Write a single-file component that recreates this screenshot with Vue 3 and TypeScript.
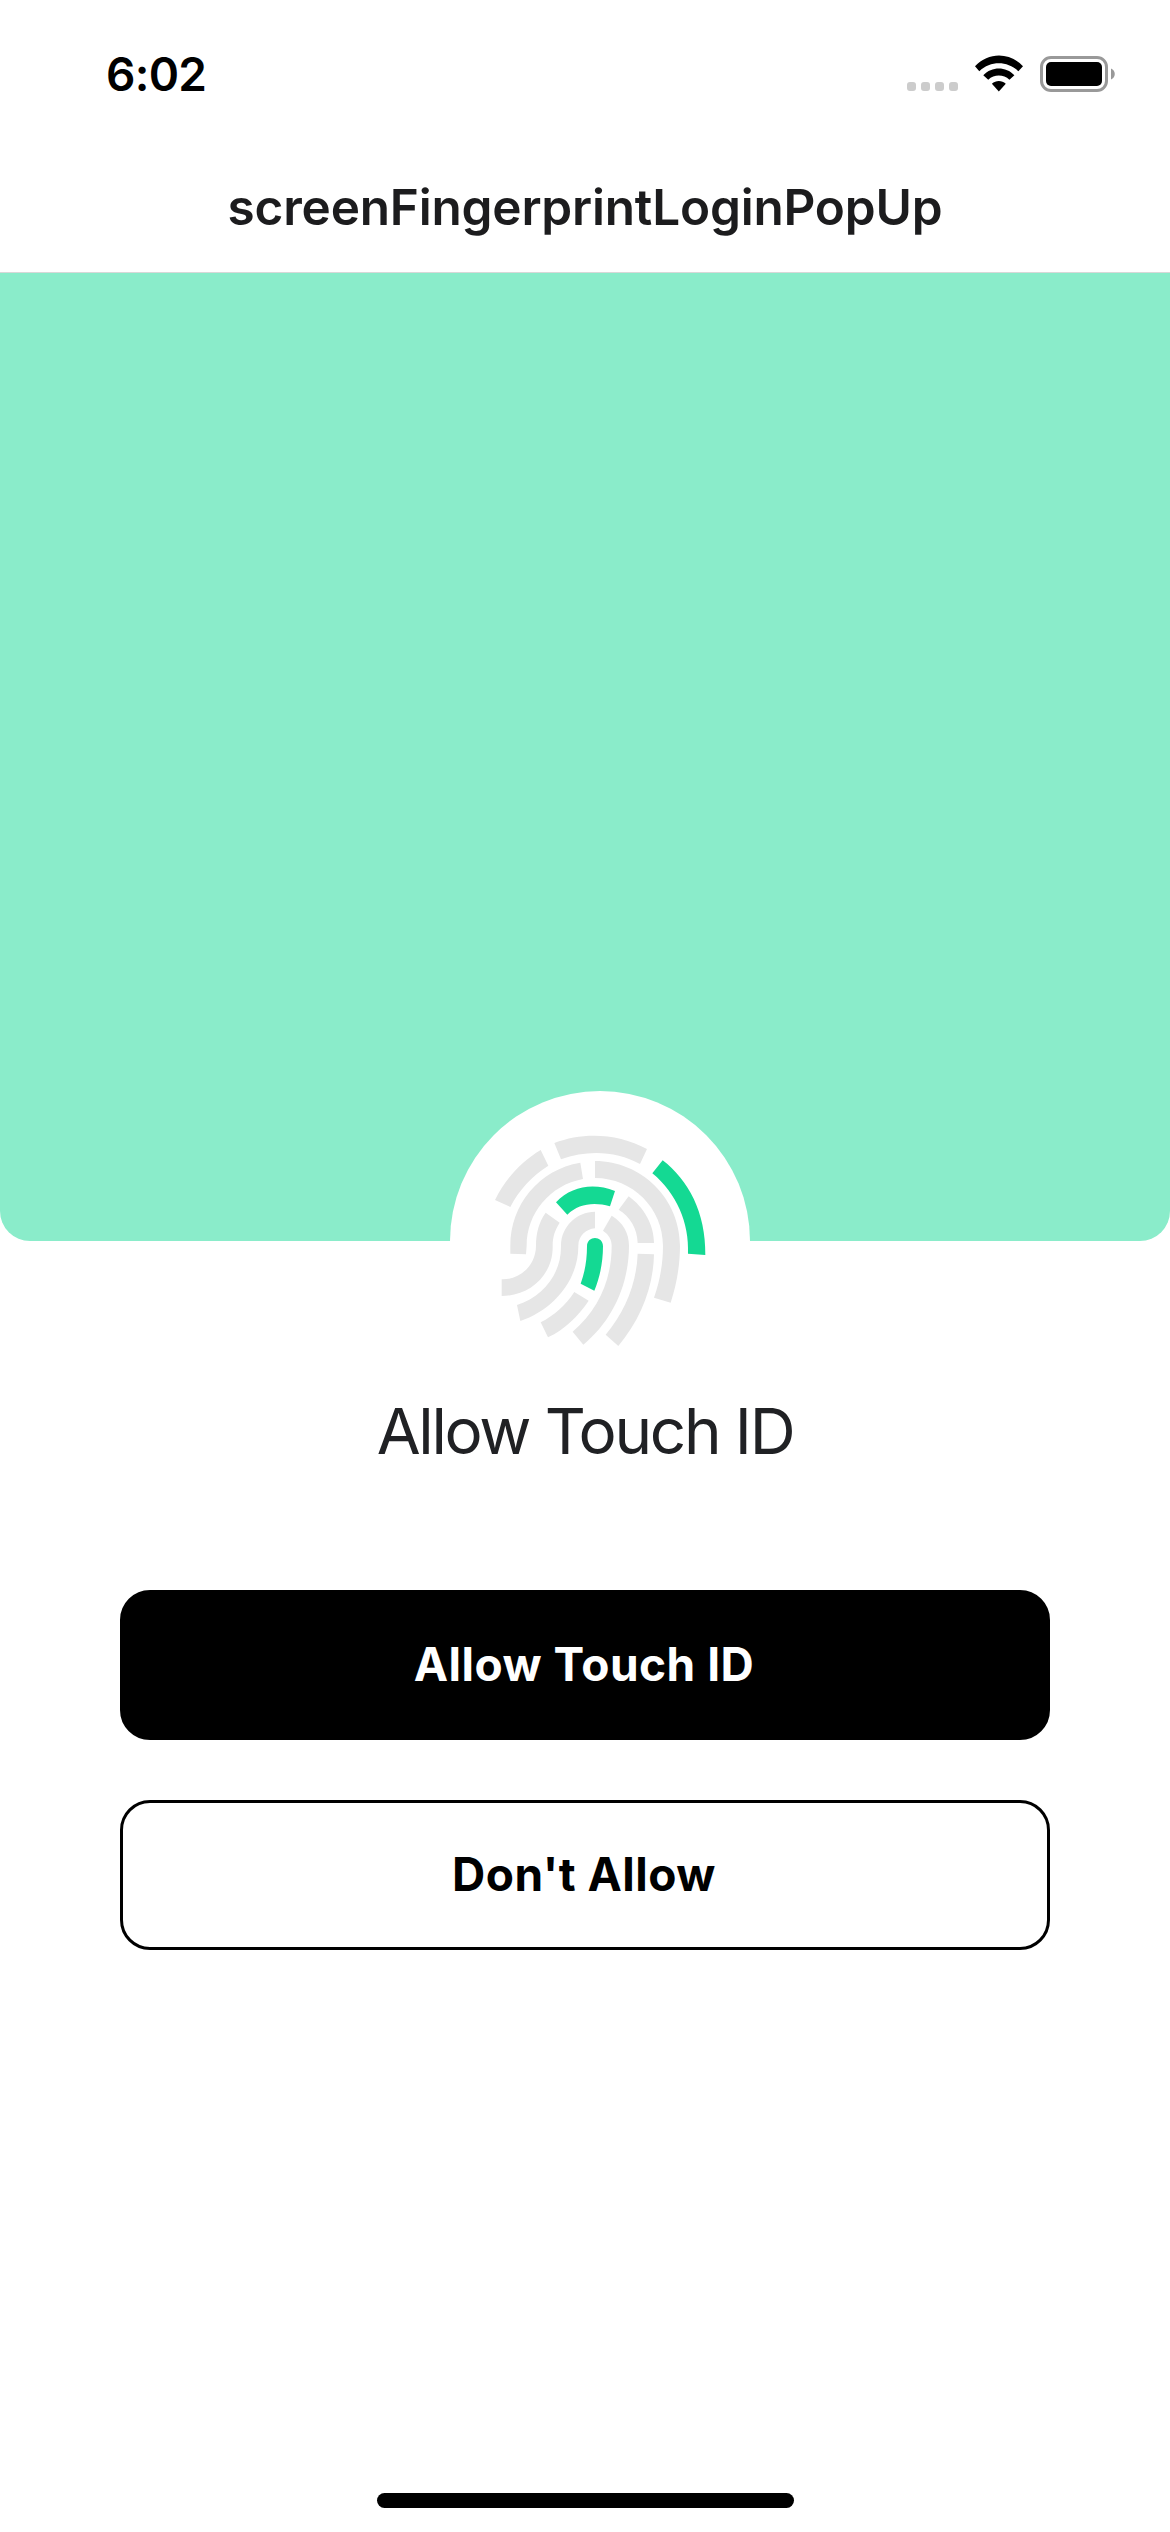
<script setup lang="ts">
const title: string = 'screenFingerprintLoginPopUp'

const greyRidges: string[] = [
  'M165 360C196 296 246 243 302 210L325 257C277 287 237 330 211 381Z',
  'M343 189C430 155 535 160 621 207L600 252C530 214 445 208 363 238Z',
  'M211 521V497C211 375 297 268 421 248L429 297C330 315 260 400 260 497L258 523Z',
  'M465 243C605 243 720 357 720 497C720 556 710 613 692 668L642 653C660 603 669 550 669 497C669 385 578 294 465 294Z',
  'M566 349C612 382 642 435 642 489H593C592 445 570 410 536 389Z',
  'M593 521L642 523C640 625 600 720 535 798L497 764C555 695 590 610 593 521Z',
  'M317 398L359 428C345 450 338 470 338 497C340 585 270 648 185 648V598C240 600 288 555 288 497C288 460 297 425 317 398Z',
  'M465 395V445C438 447 415 468 415 497C416 600 340 690 241 723L231 675C310 650 365 580 363 497C363 440 410 395 465 395Z',
  'M403 636L446 662C415 708 375 748 324 772L302 727C342 707 378 675 403 636Z',
  'M515 407C550 428 567 460 567 497C567 610 520 720 430 794L398 755C475 690 515 600 515 497C515 480 508 465 489 452Z',
]

const greenRidges: string[] = [
  'M668 241C745 300 798 398 796 525L744 521C748 430 710 340 637 280Z',
  'M348 367C395 318 460 308 525 333L510 379C460 365 415 372 382 404Z',
  'M441 499C441 466 489 466 489 499C489 545 480 592 463 632L422 611C435 575 441 540 441 499Z',
]
</script>

<template>
  <main class="screen">
    <header class="status">
      <span class="time">6:02</span>
      <div class="indicators">
        <div class="dots"><i v-for="n in 4" :key="n"></i></div>
        <svg class="wifi" viewBox="255 44 145 110" aria-hidden="true">
          <path d="M255 77C296 34 359 34 400 77L386 92C352 60 302 60 268 92Z" />
          <path d="M280 104C306 77 348 77 374 104L359 118C341 101 313 101 295 118Z" />
          <path d="M306 130C318 119 336 119 348 130L327 153Z" />
        </svg>
        <svg class="battery" viewBox="0 0 76 36" aria-hidden="true">
          <rect x="1.5" y="1.5" width="65" height="33" rx="9.5" fill="none" stroke="#999" stroke-width="3" />
          <rect x="6" y="6" width="56" height="24" rx="5" />
          <path d="M71 12.5C76 14.5 76 21.5 71 23.5Z" fill="#999" />
        </svg>
      </div>
    </header>

    <h1 class="title"><span>{{ title }}</span></h1>

    <section class="hero">
      <div class="badge">
        <svg class="fingerprint" viewBox="165 165 635 635" aria-hidden="true">
          <path v-for="d in greyRidges" :key="d" :d="d" fill="#e6e6e6" />
          <path v-for="d in greenRidges" :key="d" :d="d" fill="#14d993" />
        </svg>
      </div>
    </section>

    <h2 class="heading"><span>Allow Touch ID</span></h2>

    <div class="actions">
      <button class="btn primary" type="button">Allow Touch ID</button>
      <button class="btn outline" type="button">Don't Allow</button>
    </div>

    <div class="home"></div>
  </main>
</template>

<style>
body {
  margin: 0;
  background: #fff;
}
</style>

<style scoped>
.screen {
  box-sizing: border-box;
  width: 1170px;
  height: 2532px;
  display: flex;
  flex-direction: column;
  background: #fff;
  font-family: Inter, 'Liberation Sans', sans-serif;
  overflow: hidden;
}
.status {
  height: 141px;
  flex: none;
  display: flex;
  justify-content: space-between;
  align-items: flex-start;
  padding: 0 54px 0 106px;
}
.time {
  margin-top: 46px;
  font-size: 46px;
  line-height: 56px;
  font-weight: 600;
  letter-spacing: -0.7px;
  color: #000;
}
.indicators {
  display: flex;
  align-items: flex-start;
}
.dots {
  display: flex;
  gap: 5px;
  margin: 82px 17px 0 0;
}
.dots i {
  width: 9px;
  height: 9px;
  border-radius: 3px;
  background: #ccc;
}
.wifi {
  width: 48px;
  height: 37px;
  margin: 55px 17px 0 0;
}
.battery {
  width: 76px;
  height: 36px;
  margin-top: 56px;
}
.title {
  margin: 0;
  height: 132px;
  flex: none;
  box-sizing: border-box;
  border-bottom: 1px solid #d8d8d8;
  text-align: center;
  font-size: 49.5px;
  line-height: 132px;
  font-weight: 600;
  letter-spacing: -0.2px;
  white-space: nowrap;
  color: #1c1c1e;
}
.hero {
  position: relative;
  height: 968px;
  flex: none;
  background: #8aecca;
  border-radius: 0 0 30px 30px;
}
.badge {
  position: absolute;
  left: 450px;
  bottom: -150px;
  box-sizing: border-box;
  width: 300px;
  height: 300px;
  padding: 44px 0 0 45px;
  border-radius: 50%;
  background: #fff;
}
.fingerprint {
  display: block;
  width: 211.67px;
  height: 211.67px;
}
.heading {
  margin: 150px 0 0;
  height: 80px;
  flex: none;
  text-align: center;
  font-size: 63.7px;
  line-height: 80px;
  font-weight: 400;
  letter-spacing: -2.3px;
  color: #202124;
}
.actions {
  display: flex;
  flex-direction: column;
  gap: 60px;
  margin: 119px 120px 0;
}
.btn {
  box-sizing: border-box;
  height: 150px;
  padding: 0 2px 2px 0;
  border: 3px solid #000;
  border-radius: 30px;
  font-family: inherit;
  font-size: 46px;
  line-height: 56px;
  font-weight: 700;
  letter-spacing: 0.5px;
}
.primary {
  background: #000;
  color: #fff;
}
.outline {
  background: #fff;
  color: #000;
}
.home {
  width: 417px;
  height: 15px;
  margin: auto auto 24px;
  border-radius: 8px;
  background: #000;
}
</style>
